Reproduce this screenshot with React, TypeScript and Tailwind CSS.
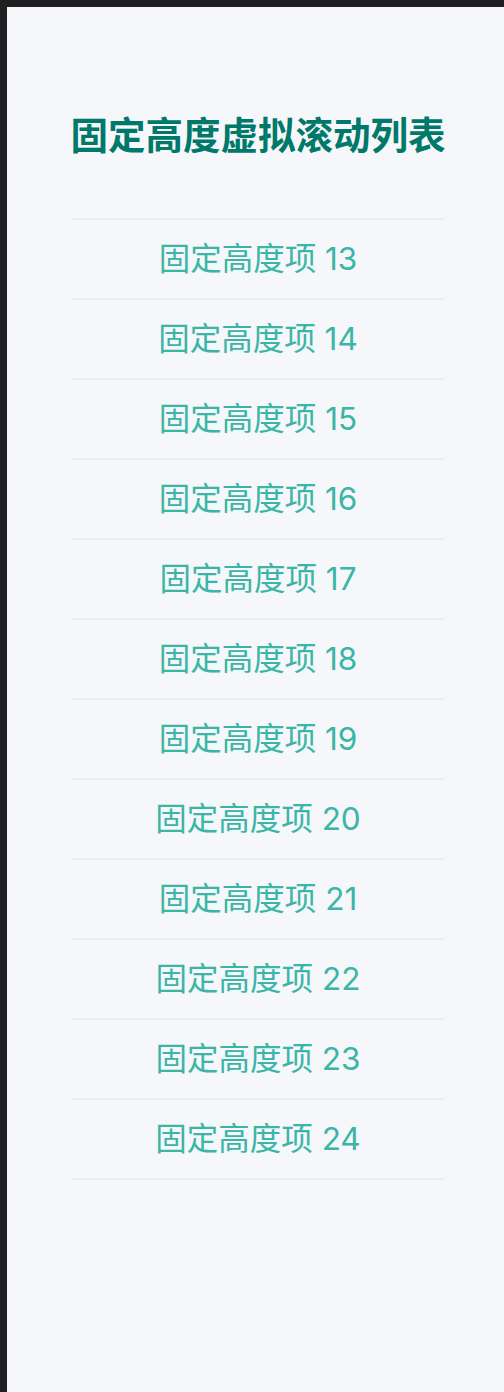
const items = Array.from({ length: 12 }, (_, i) => i + 13)

export default function App() {
  return (
    <div className="w-[504px] h-[1392px] bg-[#202020] pt-[7px] pl-[7px]">
      <div
        className="h-full w-full bg-[#f5f7fa] pt-[107px]"
        style={{ fontFamily: 'Inter, "Noto Sans CJK SC", sans-serif' }}
      >
        <div className="ml-[64px] w-[374px]">
          <h1 className="-mx-4 h-[44px] leading-[44px] whitespace-nowrap text-center text-[37.5px] font-bold text-[#00796b]">
            固定高度虚拟滚动列表
          </h1>
          <ul className="mt-[60px] border-t-2 border-[#eceef0]">
            {items.map((n) => (
              <li
                key={n}
                className="h-[80px] flex items-center justify-center border-b-2 border-[#eceef0] text-[31.5px] text-[#3bb5a6]"
              >
                固定高度项 {n}
              </li>
            ))}
          </ul>
        </div>
      </div>
    </div>
  )
}
